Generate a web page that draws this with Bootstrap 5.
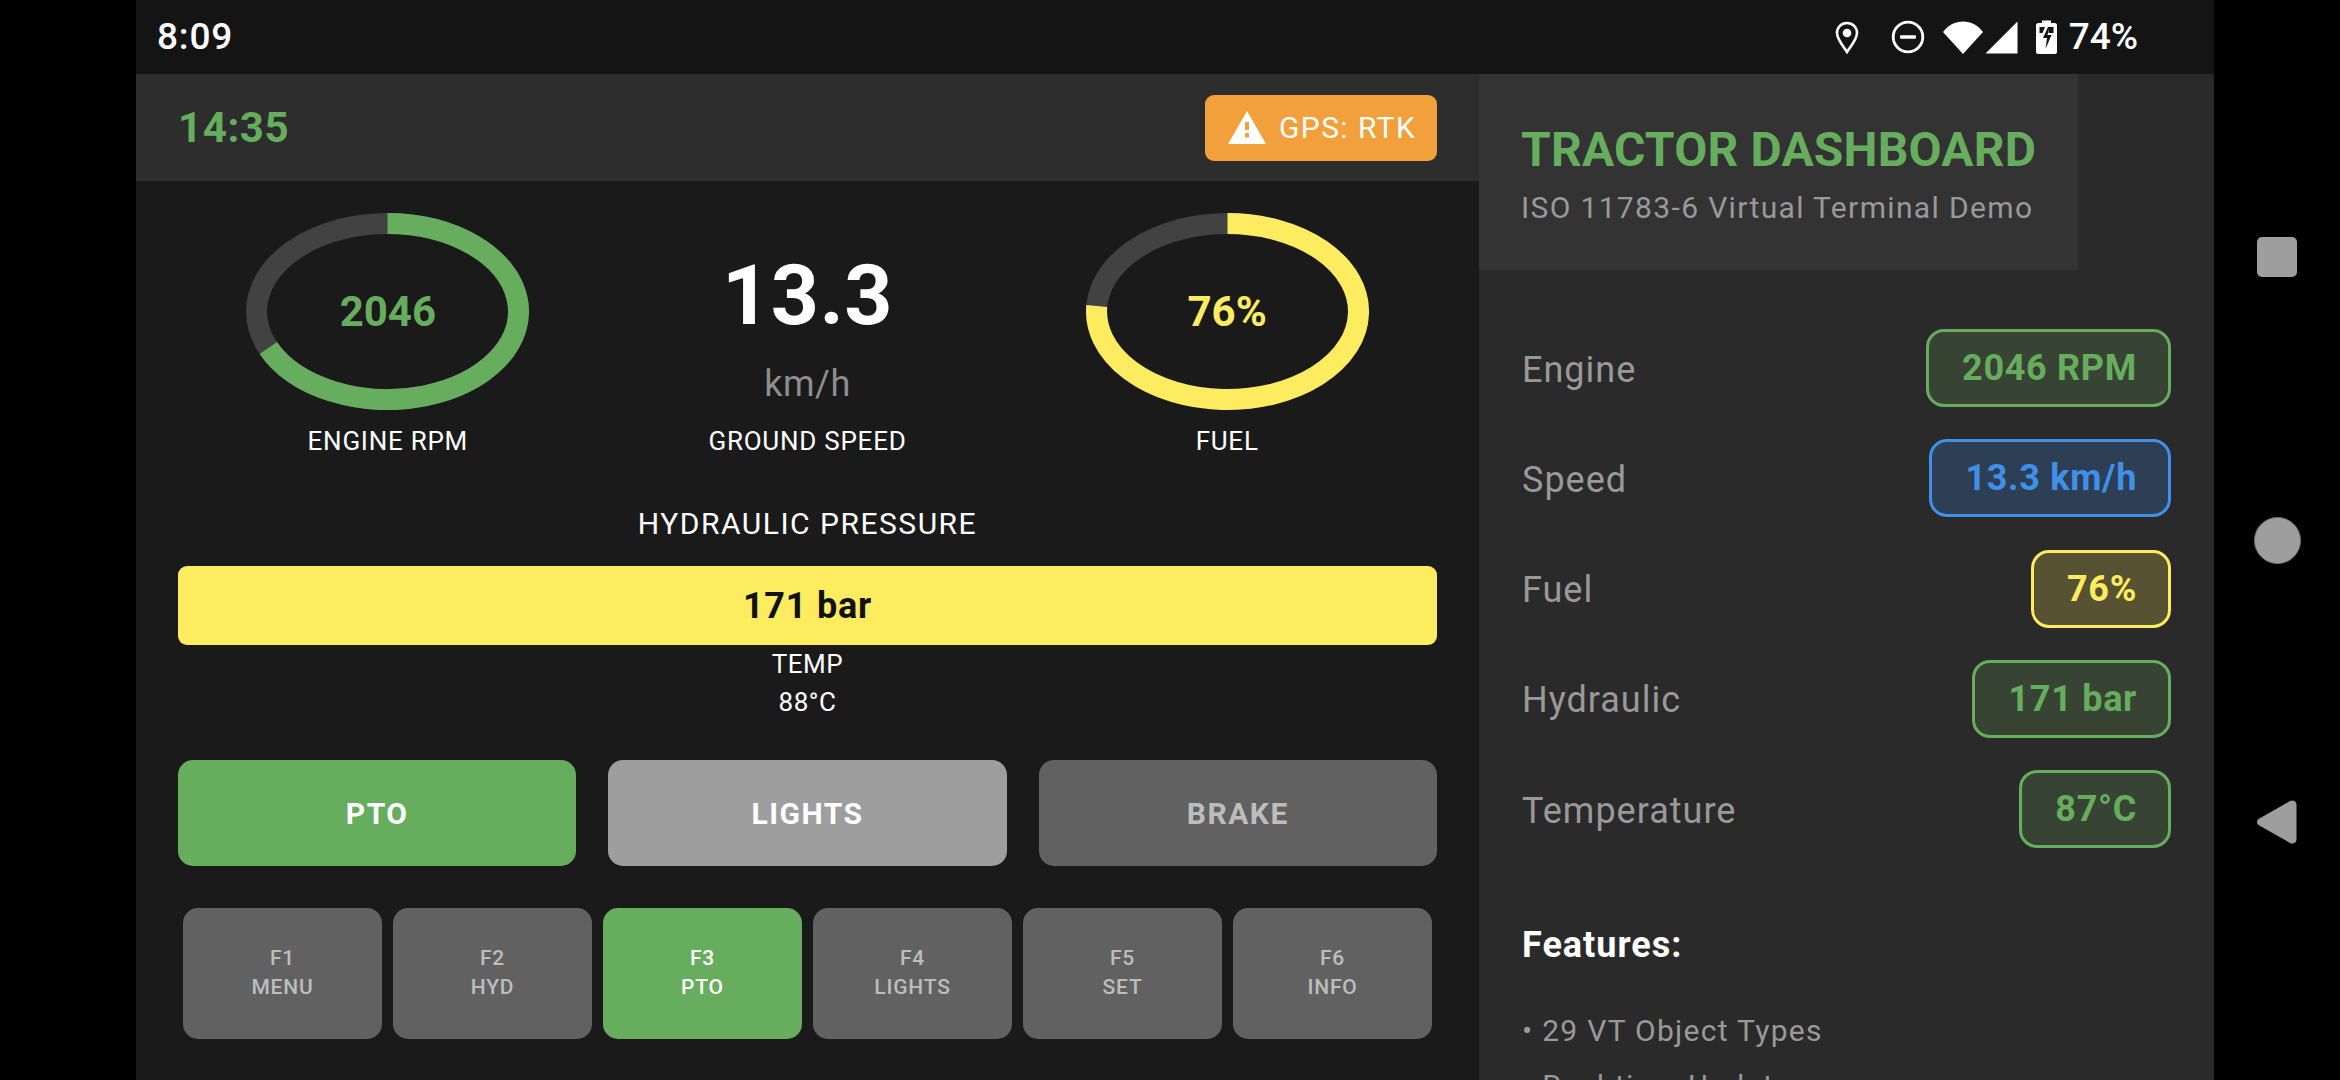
<!DOCTYPE html>
<html lang="en">
<head>
<meta charset="utf-8">
<title>Tractor Dashboard</title>
<link href="https://cdn.jsdelivr.net/npm/bootstrap@5.3.0/dist/css/bootstrap.min.css" rel="stylesheet">
<style>
html,body{height:1080px;overflow:hidden;background:#000;font-family:Roboto,"Liberation Sans",sans-serif;}
.screen{height:1080px;width:2340px;background:#000;}
.gutter{width:136px;flex:none;}
.app{width:2078px;flex:none;}
.navcol{width:126px;flex:none;}
.statusbar{height:74px;background:#141414;color:#fff;padding:0 76px 0 21px;font-size:37px;font-weight:500;flex:none;}
.statusbar svg{display:block;}
.stime{letter-spacing:.8px;}
.spct{margin-left:11.5px;}
.ic-dnd{margin-left:32px;}
.ic-wifi{margin-left:18px;}
.ic-sig{margin-left:2.5px;}
.ic-bat{margin-left:18px;}
.panelrow{height:1006px;}
.leftpanel{width:1343px;flex:none;background:#1a1a1a;}
.rightpanel{width:735px;flex:none;background:#2a2a2a;overflow:hidden;}
.topstrip{height:107px;background:#2d2d2d;padding:0 42px;}
.clock{font-size:42px;font-weight:700;color:#67ad5e;letter-spacing:.6px;}
.gpschip{height:66px;width:232px;background:#f2a03c;border-radius:9px;color:#fff;font-size:30px;padding-left:23px;gap:13px;letter-spacing:1.4px;}
.body-pad{padding:32px 42px 0;}
.ringbox{height:197px;position:relative;}
.ringbox svg{display:block;margin:0 auto;}
.ringval{position:absolute;inset:0;font-size:42px;font-weight:700;}
.tgreen{color:#67ad5e;}
.tyellow{color:#fdec60;}
.speedval{font-size:84px;font-weight:700;color:#fff;line-height:98px;margin-top:34px;letter-spacing:.5px;}
.speedunit{font-size:36px;color:#8e8e8e;line-height:50px;margin-top:14px;letter-spacing:.5px;}
.gaugelabel{font-size:26px;color:#fff;line-height:36px;margin-top:13px;letter-spacing:.75px;}
.speedunit + .gaugelabel{margin-top:14px;}
.hydtitle{font-size:30px;color:#fff;line-height:40px;margin-top:45px;letter-spacing:1.5px;}
.hydbar{height:79px;background:#fdec60;border-radius:9px;margin-top:22px;color:#111;font-size:36px;font-weight:700;letter-spacing:.8px;}
.templine{font-size:26px;color:#fff;line-height:38px;letter-spacing:.5px;}
.bigbtns{margin-top:39px;gap:32px;}
.bigbtn{height:106px;border:0;border-radius:15px;flex:1 1 0;font-size:30px;font-weight:700;padding:0;letter-spacing:1.5px;}
.fkeys{margin-top:42px;padding:0 5px;gap:11px;}
.fkey{height:131px;border:0;border-radius:15px;flex:1 1 0;font-size:21px;font-weight:500;line-height:29px;padding:0 0 2px;letter-spacing:.8px;}
.is-on{background:#67ad5e;color:#fff;}
.is-mid{background:#9e9e9e;color:#fff;}
.is-off{background:#616161;color:#bdbdbd;}
.panelhead{width:599px;height:196px;background:#333;padding-left:42px;padding-top:42px;flex:none;}
.ptitle{font-size:48px;font-weight:700;color:#67ad5e;line-height:68px;letter-spacing:.2px;}
.psub{font-size:30px;color:#999;line-height:48px;letter-spacing:1.35px;}
.readouts{padding:59px 43px 0 43px;}
.readrow{height:78px;margin-bottom:32.3px;}
.readname{font-size:36px;color:#999;font-weight:400;letter-spacing:1px;padding-top:3px;}
.pill{height:78px;border:3px solid;border-radius:18px;padding:0 31px 0 33px;font-size:36px;font-weight:700;letter-spacing:.7px;}
.pgreen{color:#67ad5e;border-color:#67ad5e;background:#374433;}
.pblue{color:#4090e8;border-color:#4090e8;background:#2c3f55;}
.pyellow{color:#fdec60;border-color:#fdec60;background:#565232;}
.feats{font-size:36px;font-weight:700;color:#fff;line-height:50px;margin-top:72px;letter-spacing:1px;}
.featlist{font-size:30px;color:#999;line-height:55px;margin-top:33px;letter-spacing:1.3px;}
.navsq{width:40px;height:40px;border-radius:5px;background:#9e9e9e;margin-top:237px;}
.navci{width:47px;height:47px;border-radius:50%;background:#9e9e9e;border:1px solid #777;margin-top:240px;}
.navtr{display:block;margin-top:236px;}
</style>
</head>
<body>
<div class="screen d-flex">
  <div class="gutter"></div>
  <div class="app d-flex flex-column">
    <div class="statusbar d-flex align-items-center justify-content-between">
      <span class="stime">8:09</span>
      <div class="d-flex align-items-center">
        <svg width="24" height="33" viewBox="0 0 24 33" fill="none"><path d="M12 2C6.300 2 2 6.400 2 12c0 6 5.500 12.500 10 19 4.500-6.500 10-13 10-19C22 6.400 17.700 2 12 2z" stroke="#fff" stroke-width="2.600"/><circle cx="12" cy="12" r="4.300" fill="#fff"/></svg>
        <svg class="ic-dnd" width="34" height="34" viewBox="0 0 34 34" fill="none"><circle cx="17" cy="17" r="14.800" stroke="#fff" stroke-width="2.800"/><rect x="9" y="15.300" width="16" height="3.400" rx="1" fill="#fff"/></svg>
        <svg class="ic-wifi" width="40" height="33" viewBox="0 0 40 33"><path d="M0 11C5 4.500 12 .5 20 .5S35 4.500 40 11L20 33z" fill="#fff"/></svg>
        <svg class="ic-sig" width="33" height="33" viewBox="0 0 33 33"><path d="M32.500 0.500V32.500H.5z" fill="#fff"/></svg>
        <svg class="ic-bat" width="21" height="34" viewBox="0 0 21 34"><path d="M6 0.500h9V3h4c1 0 2 1 2 2v27c0 1-1 2-2 2H2c-1 0-2-1-2-2V5c0-1 1-2 2-2h4z" fill="#fff"/><path d="M3.500 7h5.500l-2.500 6h-3z M13 7h4.500v6H12.500z" fill="#141414"/><path d="M12 7l-5 11h4l-1.500 11 6-14h-4l2-8z" fill="#141414"/></svg>
        <span class="spct">74%</span>
      </div>
    </div>
    <div class="panelrow d-flex">
      <div class="leftpanel d-flex flex-column">
        <div class="topstrip d-flex align-items-center justify-content-between">
          <span class="clock">14:35</span>
          <div class="gpschip d-flex align-items-center">
            <svg width="38" height="33" viewBox="0 0 38 33"><path d="M19 0L38 33H0z" fill="#fff"/><rect x="17" y="11" width="4" height="8" fill="#f2a03c"/><rect x="17" y="22" width="4" height="4.500" fill="#f2a03c"/></svg>
            <span>GPS: RTK</span>
          </div>
        </div>
        <div class="body-pad">
          <div class="row g-0 text-center">
            <div class="col-4">
              <div class="ringbox">
                <svg width="283" height="197" viewBox="0 0 283 197" fill="none">
                  <ellipse cx="141.500" cy="98.500" rx="131" ry="88" stroke="#424242" stroke-width="21"/>
                  <path d="M141.500 10.500A131 88 0 1 1 22.300 135.000" stroke="#67ad5e" stroke-width="21"/>
                </svg>
                <div class="ringval tgreen d-flex align-items-center justify-content-center">2046</div>
              </div>
              <div class="gaugelabel">ENGINE RPM</div>
            </div>
            <div class="col-4">
              <div class="speedval">13.3</div>
              <div class="speedunit">km/h</div>
              <div class="gaugelabel">GROUND SPEED</div>
            </div>
            <div class="col-4">
              <div class="ringbox">
                <svg width="283" height="197" viewBox="0 0 283 197" fill="none">
                  <ellipse cx="141.500" cy="98.500" rx="131" ry="88" stroke="#424242" stroke-width="21"/>
                  <path d="M141.500 10.500A131 88 0 1 1 10.780 93.000" stroke="#fdec60" stroke-width="21"/>
                </svg>
                <div class="ringval tyellow d-flex align-items-center justify-content-center">76%</div>
              </div>
              <div class="gaugelabel">FUEL</div>
            </div>
          </div>
          <div class="hydtitle text-center">HYDRAULIC PRESSURE</div>
          <div class="hydbar d-flex align-items-center justify-content-center">171 bar</div>
          <div class="templine text-center">TEMP</div>
          <div class="templine text-center">88°C</div>
          <div class="bigbtns d-flex">
            <button type="button" class="btn bigbtn is-on">PTO</button>
            <button type="button" class="btn bigbtn is-mid">LIGHTS</button>
            <button type="button" class="btn bigbtn is-off">BRAKE</button>
          </div>
          <div class="fkeys d-flex">
            <button type="button" class="btn fkey is-off">F1<br>MENU</button>
            <button type="button" class="btn fkey is-off">F2<br>HYD</button>
            <button type="button" class="btn fkey is-on">F3<br>PTO</button>
            <button type="button" class="btn fkey is-off">F4<br>LIGHTS</button>
            <button type="button" class="btn fkey is-off">F5<br>SET</button>
            <button type="button" class="btn fkey is-off">F6<br>INFO</button>
          </div>
        </div>
      </div>
      <div class="rightpanel d-flex flex-column">
        <div class="panelhead">
          <div class="ptitle">TRACTOR DASHBOARD</div>
          <div class="psub">ISO 11783-6 Virtual Terminal Demo</div>
        </div>
        <div class="readouts">
          <div class="readrow d-flex align-items-center justify-content-between"><span class="readname">Engine</span><span class="pill pgreen d-flex align-items-center">2046 RPM</span></div>
          <div class="readrow d-flex align-items-center justify-content-between"><span class="readname">Speed</span><span class="pill pblue d-flex align-items-center">13.3 km/h</span></div>
          <div class="readrow d-flex align-items-center justify-content-between"><span class="readname">Fuel</span><span class="pill pyellow d-flex align-items-center">76%</span></div>
          <div class="readrow d-flex align-items-center justify-content-between"><span class="readname">Hydraulic</span><span class="pill pgreen d-flex align-items-center">171 bar</span></div>
          <div class="readrow d-flex align-items-center justify-content-between"><span class="readname">Temperature</span><span class="pill pgreen d-flex align-items-center">87°C</span></div>
          <div class="feats">Features:</div>
          <ul class="featlist list-unstyled mb-0">
            <li>• 29 VT Object Types</li>
            <li>• Real-time Updates</li>
          </ul>
        </div>
      </div>
    </div>
  </div>
  <div class="navcol d-flex flex-column align-items-center">
    <div class="navsq"></div>
    <div class="navci"></div>
    <svg class="navtr" width="40" height="44" viewBox="0 0 40 44"><path d="M1.500 19L33 1c3-1.500 6 0 6.500 3v36c-.5 3-3.500 4.500-6.500 3L1.500 25c-2-1.500-2-4.500 0-6z" fill="#9e9e9e"/></svg>
  </div>
</div>
<script src="https://cdn.jsdelivr.net/npm/bootstrap@5.3.0/dist/js/bootstrap.bundle.min.js"></script>
</body>
</html>
